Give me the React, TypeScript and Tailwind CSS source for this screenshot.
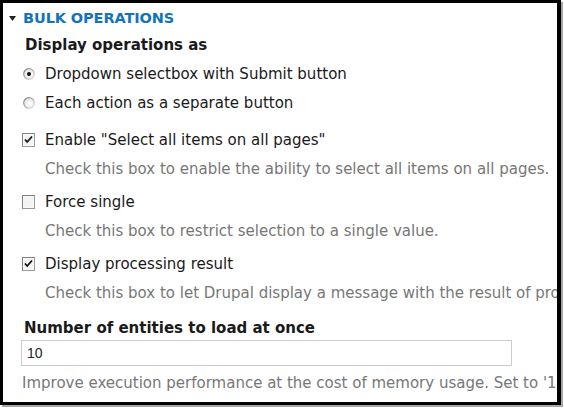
import React from "react";

const font = { fontFamily: '"DejaVu Sans", Verdana, sans-serif' };

function Radio({ checked }: { checked?: boolean }) {
  return (
    <svg width="12" height="12" viewBox="0 0 12 12" className="shrink-0">
      <defs>
        <linearGradient id={checked ? "rg1" : "rg2"} x1="0" y1="0" x2="1" y2="1">
          <stop offset="0" stopColor="#7a7a7a" />
          <stop offset="1" stopColor="#e8e8e8" />
        </linearGradient>
        <radialGradient id={checked ? "rf1" : "rf2"} cx="0.6" cy="0.6" r="0.6">
          <stop offset="0" stopColor="#ffffff" />
          <stop offset="1" stopColor="#e4e4e4" />
        </radialGradient>
      </defs>
      <circle cx="6" cy="6" r="5.3" fill={`url(#${checked ? "rf1" : "rf2"})`} stroke={`url(#${checked ? "rg1" : "rg2"})`} strokeWidth="1.2" />
      {checked && <circle cx="6" cy="6" r="2" fill="#111" />}
    </svg>
  );
}

function Checkbox({ checked }: { checked?: boolean }) {
  return (
    <svg width="13" height="14" viewBox="0 0 13 14" className="shrink-0">
      <rect x="0.5" y="0.5" width="12" height="13" fill="#ffffff" stroke="#9a9a9a" />
      <path d="M0.5 13.5 V0.5 H12.5" fill="none" stroke="#808080" />
      <rect x="1.5" y="1.5" width="10" height="11" fill="#f4f4f4" />
      {checked && <path d="M3 6.5 L5.2 9 L10 3.5" fill="none" stroke="#111" strokeWidth="1.8" />}
    </svg>
  );
}

export default function App() {
  return (
    <div className="w-[564px] h-[408px] bg-white relative" style={font}>
      <div className="w-[561px] h-[405px] border-l-[3px] border-t-[3px] border-r-[4px] border-b-[3px] border-black shadow-[2px_2px_0_#a6a6a6] overflow-hidden">
        <div className="flex flex-col whitespace-nowrap text-[15px] leading-[18px] text-[#1a1a1a]">
          <div className="pt-[6px] h-[24px] flex items-center pl-[6px]">
            <svg width="7" height="5" viewBox="0 0 7 5" className="mr-[7px]">
              <polygon points="0,0 7,0 3.5,5" fill="#222" />
            </svg>
            <span className="text-[14.5px] font-bold text-[#0f74bd] tracking-[-0.1px]">BULK OPERATIONS</span>
          </div>
          <div className="mt-[9px] h-[18px] pl-[22px] font-bold">Display operations as</div>
          <div className="mt-[11px] h-[18px] pl-[20px] flex items-center">
            <Radio checked />
            <span className="ml-[10px]">Dropdown selectbox with Submit button</span>
          </div>
          <div className="mt-[11px] h-[18px] pl-[20px] flex items-center">
            <Radio />
            <span className="ml-[10px]">Each action as a separate button</span>
          </div>
          <div className="mt-[19px] h-[18px] pl-[19px] flex items-center">
            <Checkbox checked />
            <span className="ml-[10px]">Enable "Select all items on all pages"</span>
          </div>
          <div className="mt-[11px] h-[18px] pl-[42px] text-[#777]">
            Check this box to enable the ability to select all items on all pages.
          </div>
          <div className="mt-[15px] h-[18px] pl-[19px] flex items-center">
            <Checkbox />
            <span className="ml-[10px]">Force single</span>
          </div>
          <div className="mt-[11px] h-[18px] pl-[42px] text-[#777]">
            Check this box to restrict selection to a single value.
          </div>
          <div className="mt-[15px] h-[18px] pl-[19px] flex items-center">
            <Checkbox checked />
            <span className="ml-[10px]">Display processing result</span>
          </div>
          <div className="mt-[11px] h-[18px] pl-[42px] text-[#777]">
            Check this box to let Drupal display a message with the result of processing.
          </div>
          <div className="mt-[17px] h-[18px] pl-[21px] font-bold">Number of entities to load at once</div>
          <div className="mt-[3px] ml-[18px] w-[491px] h-[26px] border border-[#ccc] flex items-center pl-[5px] text-[14px] text-[#222]" style={{ fontFamily: '"Liberation Sans", Arial, sans-serif' }}>
            10
          </div>
          <div className="mt-[8px] h-[18px] pl-[19px] text-[#777]">
            Improve execution performance at the cost of memory usage. Set to '1' to process one entity at a time.
          </div>
        </div>
      </div>
    </div>
  );
}
